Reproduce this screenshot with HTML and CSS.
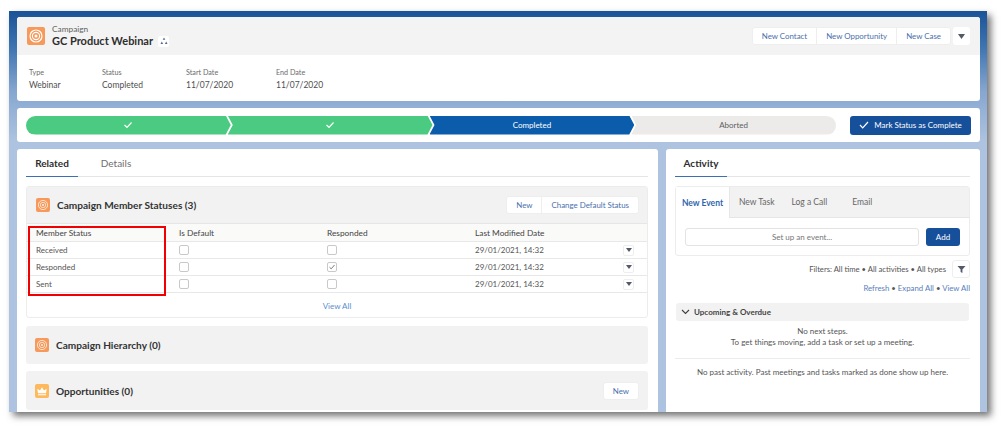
FILE: index.html
```html
<!DOCTYPE html>
<html lang="en">
<head>
    <meta charset="UTF-8">
    <meta name="viewport" content="width=device-width, initial-scale=1.0">
    <title>GC Product Webinar</title>
    <link rel="stylesheet" href="styles.css">
</head>
<body>
    <div class="window">
        <div class="highlights">
            <div class="highlights-top">
                <div class="record-icon">
                    <svg width="18" height="18" viewBox="0 0 18 18"><circle cx="9" cy="9" r="6" fill="none" stroke="#fff" stroke-width="1.2"/><circle cx="9" cy="9" r="3.6" fill="none" stroke="#fff" stroke-width="1.1"/><circle cx="9" cy="9" r="1.5" fill="#fff"/></svg>
                </div>
                <div class="record-title">
                    <div class="record-type">Campaign</div>
                    <div class="record-name">GC Product Webinar
                        <span class="hierarchy-btn">
                            <svg width="8" height="8" viewBox="0 0 8 8"><path d="M4 0.5 5.3 2.8H2.7ZM1.8 4.5 3.1 7H0.5ZM6.2 4.5 7.5 7H4.9Z" fill="#54698d"/></svg>
                        </span>
                    </div>
                </div>
                <div class="btn-group head-actions">
                    <a class="btn">New Contact</a>
                    <a class="btn">New Opportunity</a>
                    <a class="btn">New Case</a>
                </div>
                <a class="btn-more">
                    <svg width="7" height="5" viewBox="0 0 7 5"><path d="M0 0H7L3.5 5Z" fill="#54596a"/></svg>
                </a>
            </div>
            <div class="highlights-fields">
                <div class="field field-type"><span class="field-label">Type</span>Webinar</div>
                <div class="field field-status"><span class="field-label">Status</span>Completed</div>
                <div class="field field-start"><span class="field-label">Start Date</span>11/07/2020</div>
                <div class="field"><span class="field-label">End Date</span>11/07/2020</div>
            </div>
        </div>

        <div class="path-card">
            <div class="path">
                <div class="stage stage-done first">
                    <svg width="10" height="8" viewBox="0 0 10 8"><path d="M1.5 4 4 6.3 8.5 1.5" fill="none" stroke="#fff" stroke-width="1.2"/></svg>
                </div>
                <div class="stage stage-done">
                    <svg width="10" height="8" viewBox="0 0 10 8"><path d="M1.5 4 4 6.3 8.5 1.5" fill="none" stroke="#fff" stroke-width="1.2"/></svg>
                </div>
                <div class="stage stage-current">Completed</div>
                <div class="stage stage-todo">Aborted</div>
            </div>
            <a class="btn-primary btn-mark">
                <svg width="10" height="8" viewBox="0 0 10 8"><path d="M1 4 3.7 6.8 9 1" fill="none" stroke="#fff" stroke-width="1.2"/></svg>
                Mark Status as Complete
            </a>
        </div>

        <div class="columns">
            <div class="panel panel-left">
                <div class="tabs">
                    <span class="tab active">Related</span>
                    <span class="tab">Details</span>
                </div>

                <div class="related">
                    <div class="related-head">
                        <div class="section-icon icon-campaign">
                            <svg width="14" height="14" viewBox="0 0 14 14"><circle cx="7" cy="7" r="4.6" fill="none" stroke="#fff" stroke-opacity="0.7" stroke-width="1"/><circle cx="7" cy="7" r="2.7" fill="none" stroke="#fff" stroke-opacity="0.7" stroke-width="0.9"/><circle cx="7" cy="7" r="1.1" fill="#fff" fill-opacity="0.8"/></svg>
                        </div>
                        <h3>Campaign Member Statuses (3)</h3>
                        <div class="btn-group">
                            <a class="btn">New</a>
                            <a class="btn">Change Default Status</a>
                        </div>
                    </div>
                    <table class="status-table">
                        <thead>
                            <tr>
                                <th class="col-status">Member Status</th>
                                <th class="col-check">Is Default</th>
                                <th class="col-check">Responded</th>
                                <th>Last Modified Date</th>
                                <th class="col-menu"></th>
                            </tr>
                        </thead>
                        <tbody>
                            <tr>
                                <td>Received</td>
                                <td><span class="check"></span></td>
                                <td><span class="check"></span></td>
                                <td>29/01/2021, 14:32</td>
                                <td><span class="row-menu"><svg width="6" height="4" viewBox="0 0 6 4"><path d="M0 0H6L3 4Z" fill="#54596a"/></svg></span></td>
                            </tr>
                            <tr>
                                <td>Responded</td>
                                <td><span class="check"></span></td>
                                <td><span class="check"><svg width="8" height="8" viewBox="0 0 8 8"><path d="M1.5 4.2 3.2 5.8 6.5 2" fill="none" stroke="#6b6d70" stroke-width="0.9"/></svg></span></td>
                                <td>29/01/2021, 14:32</td>
                                <td><span class="row-menu"><svg width="6" height="4" viewBox="0 0 6 4"><path d="M0 0H6L3 4Z" fill="#54596a"/></svg></span></td>
                            </tr>
                            <tr>
                                <td>Sent</td>
                                <td><span class="check"></span></td>
                                <td><span class="check"></span></td>
                                <td>29/01/2021, 14:32</td>
                                <td><span class="row-menu"><svg width="6" height="4" viewBox="0 0 6 4"><path d="M0 0H6L3 4Z" fill="#54596a"/></svg></span></td>
                            </tr>
                        </tbody>
                    </table>
                    <div class="view-all">View All</div>
                    <div class="red-box"></div>
                </div>

                <div class="related-closed closed-hierarchy">
                    <div class="section-icon icon-campaign">
                        <svg width="14" height="14" viewBox="0 0 14 14"><circle cx="7" cy="7" r="4.6" fill="none" stroke="#fff" stroke-opacity="0.7" stroke-width="1"/><circle cx="7" cy="7" r="2.7" fill="none" stroke="#fff" stroke-opacity="0.7" stroke-width="0.9"/><circle cx="7" cy="7" r="1.1" fill="#fff" fill-opacity="0.8"/></svg>
                    </div>
                    <h3>Campaign Hierarchy (0)</h3>
                </div>

                <div class="related-closed closed-opps">
                    <div class="section-icon icon-opportunity">
                        <svg width="14" height="14" viewBox="0 0 14 14"><path d="M3 9.3 2.3 4.8 5 6.5 7 3.2 9 6.5 11.7 4.8 11 9.3ZM3 10.2H11V11.2H3Z" fill="#fff"/></svg>
                    </div>
                    <h3>Opportunities (0)</h3>
                    <a class="btn btn-single">New</a>
                </div>
            </div>

            <div class="panel panel-right">
                <div class="tabs">
                    <span class="tab active">Activity</span>
                </div>

                <div class="composer">
                    <div class="composer-tabs">
                        <span class="ctab active">New Event</span>
                        <span class="ctab ctab-task">New Task</span>
                        <span class="ctab ctab-call">Log a Call</span>
                        <span class="ctab">Email</span>
                    </div>
                    <div class="composer-body">
                        <div class="composer-input">Set up an event...</div>
                        <a class="btn-primary btn-add">Add</a>
                    </div>
                </div>

                <div class="filters">
                    <span>Filters: All time &bull; All activities &bull; All types</span>
                    <a class="btn-filter">
                        <svg width="9" height="9" viewBox="0 0 9 9"><path d="M0.5 1H8.5L5.4 4.6V8L3.6 7V4.6Z" fill="#54596a"/></svg>
                    </a>
                </div>
                <div class="activity-links"><a>Refresh</a> &bull; <a>Expand All</a> &bull; <a>View All</a></div>

                <div class="upcoming">
                    <svg width="9" height="6" viewBox="0 0 9 6"><path d="M1 1 4.5 4.5 8 1" fill="none" stroke="#3e3e3c" stroke-width="1.1"/></svg>
                    Upcoming &amp; Overdue
                </div>
                <p class="empty-next">No next steps.<br>To get things moving, add a task or set up a meeting.</p>
                <p class="empty-past">No past activity. Past meetings and tasks marked as done show up here.</p>
            </div>
        </div>
    </div>
</body>
</html>
```

FILE: styles.css
```css
html, body {
    margin: 0;
    padding: 0;
    background: #fff;
    height: 431px;
    overflow: hidden;
}
body {
    font-family: Lato, 'Open Sans', sans-serif;
    font-size: 8px;
    color: #4a4a4a;
    padding: 11px 0 0 9px;
    box-sizing: border-box;
}
a {
    color: #3f6db0;
}

.window {
    position: relative;
    box-sizing: border-box;
    width: 978px;
    height: 401px;
    padding: 6px 7px 0 8px;
    overflow: hidden;
    background: linear-gradient(#1a5396 0, #3c73b0 35px, #86a6d0 80px, #adc3e0 130px, #adc3e0 100%);
    box-shadow: 4px 4px 7px rgba(0, 0, 0, 0.55);
}

/* top card */
.highlights {
    height: 84px;
    background: #fff;
    border-radius: 3px;
    overflow: hidden;
}
.highlights-top {
    display: flex;
    align-items: center;
    height: 38px;
    padding: 0 10px;
    background: #f3f3f3;
    box-sizing: border-box;
}
.record-icon {
    width: 18px;
    height: 18px;
    margin-right: 7px;
    background: #f6995a;
    border-radius: 2px;
    display: flex;
}
.record-title {
    flex: 1;
}
.record-type {
    font-size: 8.3px;
    line-height: 10px;
    color: #5f5f5f;
}
.record-name {
    display: flex;
    align-items: center;
    font-size: 11px;
    line-height: 14px;
    font-weight: 700;
    color: #2e2e2e;
}
.hierarchy-btn {
    display: flex;
    align-items: center;
    justify-content: center;
    width: 11px;
    height: 11px;
    margin-left: 5px;
    background: #fff;
    border-radius: 2px;
}
.btn-group {
    display: flex;
    background: #fff;
    border-radius: 3px;
    border: 1px solid #eee;
    box-sizing: border-box;
    height: 18px;
}
.btn {
    display: flex;
    align-items: center;
    padding: 0 9px;
    font-size: 7.9px;
    color: #4a70ad;
    border-left: 1px solid #eee;
}
.btn:first-child {
    border-left: none;
}
.btn-more {
    display: flex;
    align-items: center;
    justify-content: center;
    width: 17px;
    height: 18px;
    margin-left: 2px;
    background: #fff;
    border-radius: 3px;
}
.highlights-fields {
    display: flex;
    padding: 13px 0 0 12px;
    font-size: 8.5px;
    color: #4f4f4f;
}
.field-label {
    display: block;
    font-size: 7.2px;
    line-height: 10px;
    margin-bottom: 2px;
    color: #6b6b6b;
}
.field-type {
    width: 73px;
}
.field-status {
    width: 84px;
}
.field-start {
    width: 90px;
}

/* path */
.path-card {
    display: flex;
    align-items: center;
    height: 34px;
    margin-top: 7px;
    padding: 0 9px;
    background: #fff;
    border-radius: 3px;
    box-sizing: border-box;
}
.path {
    display: flex;
    width: 810px;
    height: 19px;
    margin-right: 14px;
    border-radius: 10px;
    overflow: hidden;
}
.stage {
    flex: 1;
    display: flex;
    align-items: center;
    justify-content: center;
    margin-right: -3px;
    font-size: 8px;
    clip-path: polygon(0 0, calc(100% - 5px) 0, 100% 50%, calc(100% - 5px) 100%, 0 100%, 5px 50%);
}
.stage.first {
    clip-path: polygon(0 0, calc(100% - 5px) 0, 100% 50%, calc(100% - 5px) 100%, 0 100%);
}
.stage-done {
    background: #4bca81;
}
.stage-current {
    background: #0b5cab;
    color: #fff;
}
.stage-todo {
    background: #ecebea;
    color: #5e5e5e;
    margin-right: 0;
    clip-path: polygon(0 0, 100% 0, 100% 100%, 0 100%, 5px 50%);
}
.btn-primary {
    display: flex;
    align-items: center;
    justify-content: center;
    background: #17509a;
    color: #fff;
    border-radius: 3px;
}
.btn-mark {
    width: 121px;
    height: 19px;
    gap: 5px;
    font-size: 8px;
}

/* columns */
.columns {
    display: flex;
    gap: 8px;
    margin-top: 7px;
}
.panel {
    box-sizing: border-box;
    height: 270px;
    padding: 0 10px 0 9px;
    background: #fff;
    border-radius: 3px 3px 0 0;
}
.panel-left {
    width: 641px;
}
.panel-right {
    width: 314px;
}
.tabs {
    display: flex;
    height: 27px;
    border-bottom: 1px solid #e5e5e5;
}
.tab {
    display: flex;
    align-items: center;
    justify-content: center;
    width: 52px;
    font-size: 10px;
    color: #6e6e6e;
}
.tab + .tab {
    width: 76px;
}
.tab.active {
    color: #2e2e2e;
    font-weight: 700;
    border-bottom: 1px solid #3b6fb6;
    margin-bottom: -1px;
}

.related {
    position: relative;
    height: 132px;
    margin-top: 9px;
    border: 1px solid #ececec;
    border-radius: 3px;
    box-sizing: border-box;
}
.related-head, .related-closed {
    display: flex;
    align-items: center;
    background: #f2f2f2;
    padding: 0 9px;
}
.related-head {
    height: 36px;
    padding-right: 8px;
    border-bottom: 1px solid #e6e6e6;
}
.related-closed {
    height: 38px;
    margin-top: 8px;
    border-radius: 3px;
    box-sizing: border-box;
}
.closed-opps {
    height: 39px;
    margin-top: 7px;
}
.section-icon {
    display: flex;
    width: 14px;
    height: 14px;
    border-radius: 2px;
    margin-right: 7px;
}
.icon-campaign {
    background: #f6995a;
}
.icon-opportunity {
    background: #fdb95c;
}
h3 {
    flex: 1;
    margin: 0;
    font-size: 10.1px;
    font-weight: 700;
    color: #333;
}
.btn-single {
    height: 18px;
    background: #fff;
    border: 1px solid #eee;
    border-radius: 3px;
    box-sizing: border-box;
}

.status-table {
    width: 100%;
    border-collapse: collapse;
    table-layout: fixed;
    font-size: 8px;
}
.status-table th {
    height: 17px;
    padding: 0 0 0 9px;
    background: #fafaf9;
    font-weight: 400;
    font-size: 8.3px;
    text-align: left;
    color: #444;
    border-bottom: 1px solid #e8e8e8;
}
.status-table td {
    height: 16px;
    padding: 0 0 0 9px;
    color: #555;
    border-bottom: 1px solid #e8e8e8;
}
.col-status {
    width: 134px;
}
.col-check {
    width: 139px;
}
.col-menu {
    width: 24px;
}
.check {
    display: flex;
    align-items: center;
    justify-content: center;
    width: 10px;
    height: 10px;
    box-sizing: border-box;
    background: #fff;
    border: 1px solid #c9c9c9;
    border-radius: 2px;
}
.row-menu {
    display: flex;
    align-items: center;
    justify-content: center;
    width: 11px;
    height: 11px;
    background: #fff;
    border: 1px solid #eee;
    border-radius: 2px;
    box-sizing: border-box;
}
.view-all {
    padding-top: 8px;
    text-align: center;
    font-size: 8px;
    color: #5a8fd0;
}
.red-box {
    position: absolute;
    left: 1px;
    top: 39px;
    width: 138px;
    height: 70px;
    box-sizing: border-box;
    border: 2px solid #f00000;
}

/* activity */
.composer {
    margin-top: 9px;
    height: 70px;
    border: 1px solid #ececec;
    border-radius: 3px;
    box-sizing: border-box;
}
.composer-tabs {
    display: flex;
    height: 31px;
    background: #f2f2f2;
    border-bottom: 1px solid #e6e6e6;
    box-sizing: border-box;
    font-size: 8.5px;
    color: #666;
}
.ctab {
    display: flex;
    align-items: center;
    padding: 0 8px 0 9px;
}
.ctab.active {
    width: 54px;
    padding: 0;
    justify-content: center;
    box-sizing: border-box;
    margin-bottom: -1px;
    background: #fff;
    color: #2f65ad;
    font-weight: 700;
    border-right: 1px solid #e6e6e6;
}
.ctab-call {
    margin-right: 8px;
}
.composer-body {
    display: flex;
    gap: 7px;
    padding: 10px 9px 0;
}
.composer-input {
    flex: 1;
    height: 18px;
    line-height: 16px;
    text-align: center;
    font-size: 8px;
    color: #777;
    border: 1px solid #e3e3e3;
    border-radius: 3px;
    box-sizing: border-box;
}
.btn-add {
    width: 34px;
    height: 18px;
    font-size: 8px;
}
.filters {
    display: flex;
    align-items: center;
    justify-content: flex-end;
    gap: 6px;
    margin-top: 4px;
    font-size: 7.7px;
    color: #555;
}
.btn-filter {
    display: flex;
    align-items: center;
    justify-content: center;
    width: 18px;
    height: 18px;
    background: #fff;
    border: 1px solid #eee;
    border-radius: 3px;
    box-sizing: border-box;
}
.activity-links {
    margin-top: 4px;
    line-height: 12px;
    text-align: right;
    font-size: 7.8px;
    color: #555;
}
.activity-links a {
    color: #5a80bb;
}
.upcoming {
    display: flex;
    align-items: center;
    gap: 4px;
    height: 18px;
    margin: 9px 1px 0;
    padding-left: 5px;
    background: #f2f2f2;
    border-radius: 3px;
    font-size: 8px;
    font-weight: 700;
    color: #444;
}
.empty-next {
    margin: 0;
    padding: 5px 0 10px;
    line-height: 11px;
    text-align: center;
    font-size: 8px;
    color: #555;
    border-bottom: 1px solid #ececec;
}
.empty-past {
    margin: 8px 0 0;
    line-height: 11px;
    text-align: center;
    font-size: 8px;
    color: #555;
}
```
